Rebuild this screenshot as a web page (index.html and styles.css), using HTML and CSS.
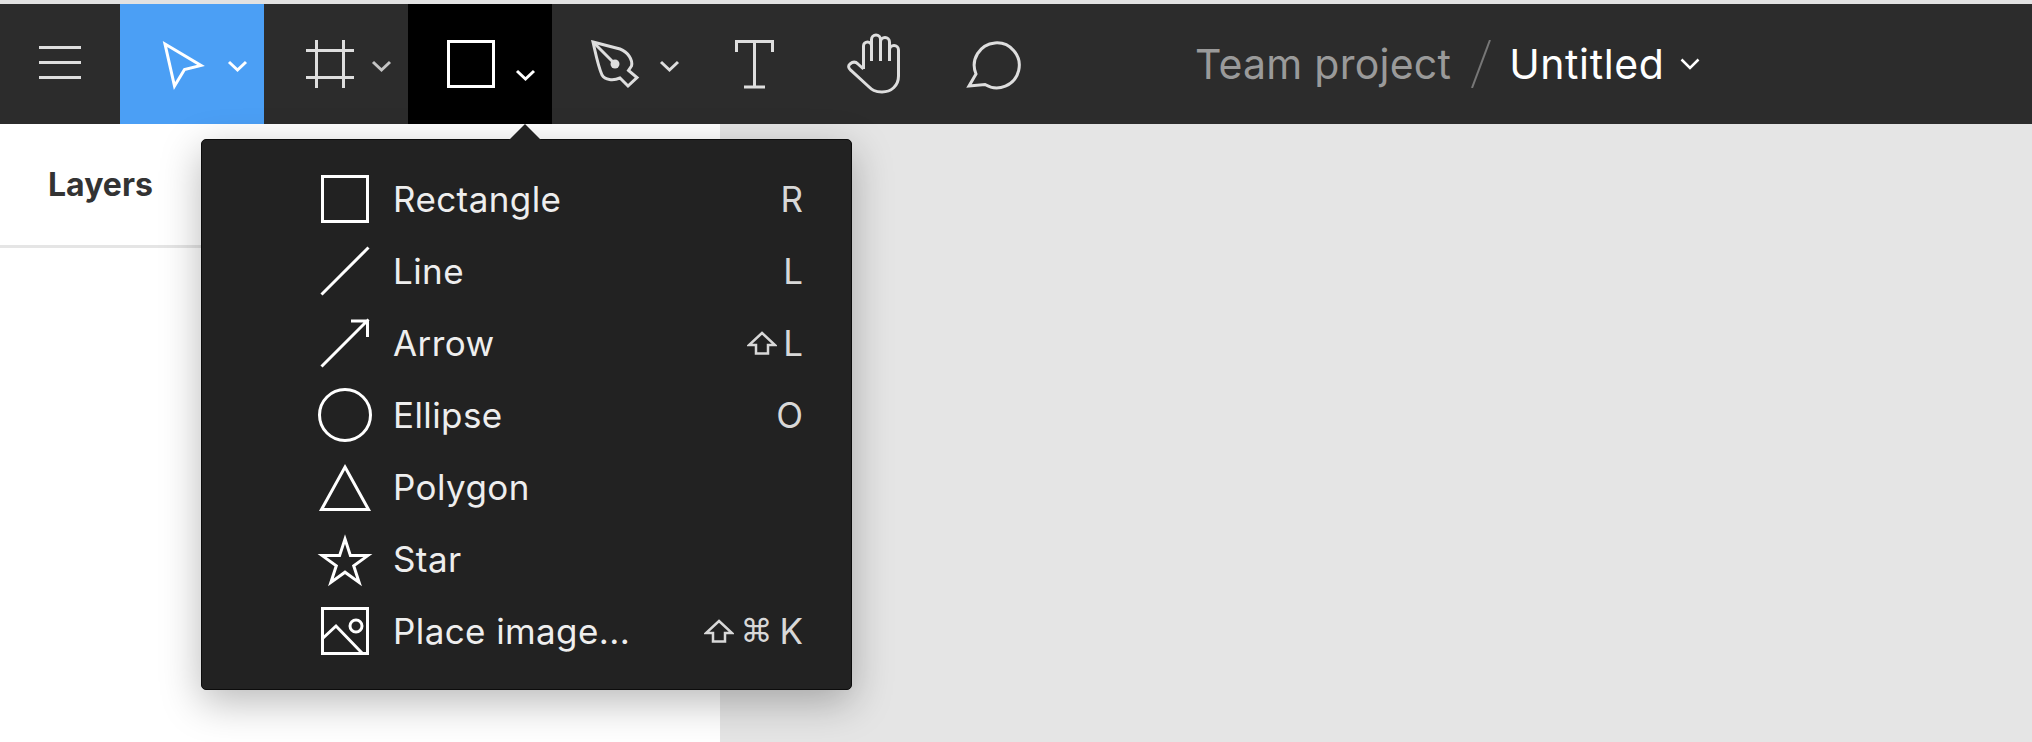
FILE: index.html
```html
<!DOCTYPE html>
<html>
<head>
    <title>Team project / Untitled</title>
    <meta charset="UTF-8">
    <link rel="stylesheet" href="styles.css">
</head>
<body>
    <header class="toolbar">
        <div class="tool tool-menu">
            <svg viewBox="0 4 120 120"><path d="M39 47.5H81M39 62.5H81M39 77.5H81"/></svg>
        </div>
        <div class="tool tool-wide tool-active">
            <svg viewBox="120 4 144 120">
                <path d="M165 44L201 65.5L184.5 69.5L174.5 86Z"/>
                <path d="M229 62L237.5 70L246 62"/>
            </svg>
        </div>
        <div class="tool tool-wide">
            <svg viewBox="264 4 144 120">
                <path d="M316.5 40V88M343.5 40V88M306 50.5H354M306 77.5H354"/>
                <path class="caret-dim" d="M373 62L381.5 70L390 62"/>
            </svg>
        </div>
        <div class="tool tool-wide tool-open">
            <svg viewBox="408 4 144 120">
                <rect x="448.5" y="41.5" width="45" height="45"/>
                <path d="M517 71L525.5 79L534 71"/>
            </svg>
        </div>
        <div class="tool tool-wide">
            <svg viewBox="552 4 144 120">
                <path d="M593 42L620 49C628 52 633 60 631.5 66L628.5 70.5L637 77.5L628 86L620 78C613 81 605 80 602 75C598 66 596 55 593 42Z"/>
                <path d="M593 42L615 64"/>
                <circle class="fill" cx="615" cy="64" r="4.5"/>
                <path d="M661 62L669.5 70L678 62"/>
            </svg>
        </div>
        <div class="tool">
            <svg viewBox="696 4 120 120"><path d="M736.5 52V41.5H772.5V52M754.5 41.5V87M744 87H765"/></svg>
        </div>
        <div class="tool">
            <svg viewBox="816 4 120 120">
                <path d="M863.5 69V46A4 4 0 0 1 871.5 46V61M871.5 46V39.5A4.5 4.5 0 0 1 880.5 39.5V61M880.5 42A4.5 4.5 0 0 1 889.5 42V61M889.5 50A4.5 4.5 0 0 1 898.5 50V76C898.5 86 891 92 882 92C875 92 872 90 868 86L851 70.5C848 68 848 65.5 850 64C853 61.5 856 62 858 64L863.5 69"/>
            </svg>
        </div>
        <div class="tool">
            <svg viewBox="936 4 120 120"><path d="M976 74L969 86L985 84.5A22.5 22.5 0 1 0 976 74Z"/></svg>
        </div>
        <div class="doc-title">
            <span class="doc-team">Team project</span>
            <svg class="doc-slash" viewBox="0 0 20 48"><path d="M19 0L1 48"/></svg>
            <span class="doc-name">Untitled</span>
            <svg class="doc-caret" viewBox="0 0 20 12"><path d="M1.5 1.5L10 10L18.5 1.5"/></svg>
        </div>
    </header>

    <main class="workspace">
        <aside class="sidebar">
            <div class="sidebar-tabs">
                <span class="tab">Layers</span>
            </div>
        </aside>
        <div class="canvas"></div>
    </main>

    <div class="shape-menu">
        <div class="menu-row">
            <svg class="menu-icon" viewBox="0 0 60 60"><rect x="7.5" y="7.5" width="45" height="45"/></svg>
            <span class="menu-label">Rectangle</span>
            <span class="menu-key">R</span>
        </div>
        <div class="menu-row">
            <svg class="menu-icon" viewBox="0 0 60 60"><path d="M6.5 53.5L53.5 6.5"/></svg>
            <span class="menu-label">Line</span>
            <span class="menu-key">L</span>
        </div>
        <div class="menu-row">
            <svg class="menu-icon" viewBox="0 0 60 60"><path d="M6.5 53.5L53.5 6.5M36 8H52.5V24"/></svg>
            <span class="menu-label">Arrow</span>
            <span class="menu-key">
                <svg class="key-shift" viewBox="0 0 30 24"><path d="M15 2L28 14H21V22.5H9V14H2Z"/></svg>
                L
            </span>
        </div>
        <div class="menu-row">
            <svg class="menu-icon" viewBox="0 0 60 60"><circle cx="30" cy="30" r="25.5"/></svg>
            <span class="menu-label">Ellipse</span>
            <span class="menu-key">O</span>
        </div>
        <div class="menu-row">
            <svg class="menu-icon" viewBox="0 0 60 60"><path d="M30 10L53.5 52.5H6.5Z"/></svg>
            <span class="menu-label">Polygon</span>
            <span class="menu-key"></span>
        </div>
        <div class="menu-row">
            <svg class="menu-icon" viewBox="0 0 60 60"><path d="M30 10L35.4 26.6H52.8L38.7 36.8L44.1 53.4L30 43.2L15.9 53.4L21.3 36.8L7.2 26.6H24.6Z"/></svg>
            <span class="menu-label">Star</span>
            <span class="menu-key"></span>
        </div>
        <div class="menu-row">
            <svg class="menu-icon" viewBox="0 0 60 60">
                <rect x="7.5" y="7.5" width="45" height="45"/>
                <circle cx="41" cy="25" r="6"/>
                <path d="M7 38L21 25L47 52"/>
            </svg>
            <span class="menu-label">Place image...</span>
            <span class="menu-key">
                <svg class="key-shift" viewBox="0 0 30 24"><path d="M15 2L28 14H21V22.5H9V14H2Z"/></svg>
                <span class="key-cmd">⌘</span>
                K
            </span>
        </div>
    </div>
</body>
</html>
```

FILE: styles.css
```css
body {
    margin: 0;
    height: 742px;
    overflow: hidden;
    font-family: Inter, 'Noto Sans', sans-serif;
    background-color: #e5e5e5;
    display: flex;
    flex-direction: column;
}
.toolbar {
    display: flex;
    align-items: center;
    height: 120px;
    border-top: 4px solid #e2e2e2;
    background-color: #2c2c2c;
    flex-shrink: 0;
}
.tool {
    width: 120px;
    height: 120px;
    flex-shrink: 0;
}
.tool-wide {
    width: 144px;
}
.tool-active {
    background-color: #4b9ff5;
}
.tool-open {
    background-color: #000;
}
.tool svg {
    display: block;
    width: 100%;
    height: 100%;
    fill: none;
    stroke: #dedede;
    stroke-width: 3;
}
.tool svg .fill {
    fill: #dedede;
    stroke: none;
}
.tool svg .caret-dim {
    stroke: #c4c4c4;
}
.tool-active svg,
.tool-open svg {
    stroke: #fff;
}
.doc-title {
    display: flex;
    align-items: center;
    margin-left: 139px;
    font-size: 41px;
}
.doc-team {
    color: #9a9a9a;
    letter-spacing: 0.25px;
}
.doc-name {
    color: #fff;
    letter-spacing: 0.6px;
}
.doc-slash {
    width: 20px;
    height: 48px;
    margin: 0 18px 0 20px;
    fill: none;
    stroke: #777;
    stroke-width: 2;
}
.doc-caret {
    width: 20px;
    height: 12px;
    margin-left: 16px;
    fill: none;
    stroke: #fff;
    stroke-width: 2.5;
}
.workspace {
    display: flex;
    flex: 1;
}
.sidebar {
    width: 720px;
    background-color: #fff;
}
.sidebar-tabs {
    display: flex;
    align-items: center;
    height: 121px;
    padding-left: 48px;
    border-bottom: 3px solid #e5e5e5;
}
.tab {
    font-size: 32px;
    font-weight: 700;
    color: #333;
}
.canvas {
    flex: 1;
    background-color: #e5e5e5;
}

/* dropdown under the shape tool */
.shape-menu {
    position: absolute;
    left: 201px;
    top: 139px;
    width: 651px;
    height: 551px;
    box-sizing: border-box;
    padding: 23px 48px 0 114px;
    background-color: #222;
    border: 1px solid #0c0c0c;
    border-radius: 5px;
    box-shadow: 0 12px 40px rgba(0, 0, 0, 0.28);
}
.shape-menu::before {
    content: "";
    position: absolute;
    left: 307px;
    top: -16px;
    width: 0;
    height: 0;
    border-left: 16px solid transparent;
    border-right: 16px solid transparent;
    border-bottom: 16px solid #222;
}
.menu-row {
    display: flex;
    align-items: center;
    height: 72px;
}
.menu-icon {
    width: 60px;
    height: 60px;
    margin-left: -1px;
    fill: none;
    stroke: #fff;
    stroke-width: 3;
    flex-shrink: 0;
}
.menu-label {
    margin-left: 18px;
    font-size: 35px;
    letter-spacing: 0.4px;
    color: #eee;
}
.menu-key {
    display: flex;
    align-items: center;
    margin-left: auto;
    font-size: 35px;
    color: #d8d8d8;
}
.key-shift {
    width: 30px;
    height: 24px;
    margin-right: 6px;
    fill: none;
    stroke: #d8d8d8;
    stroke-width: 2.5;
}
.key-cmd {
    font-family: 'DejaVu Sans', sans-serif;
    font-size: 32px;
    margin-right: 7px;
}
```
